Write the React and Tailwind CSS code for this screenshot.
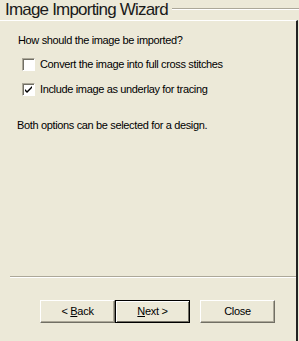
import React from 'react';

const Checkbox = ({ checked }) => (
  <span className="w-[13px] h-[13px] bg-white border border-t-[#aca899] border-l-[#aca899] border-b-white border-r-white shadow-[inset_1px_1px_0_#716f64] flex items-center justify-center shrink-0">
    {checked && (
      <svg width="9" height="9" viewBox="0 0 9 9">
        <path d="M1 4 L3 6 L8 1 L8 3 L3 8 L1 6 Z" fill="#000" />
      </svg>
    )}
  </span>
);

const WizButton = ({ children, isDefault, className = '' }) => (
  <button
    className={`w-[75px] h-[23px] shrink-0 bg-[#ece9d8] text-[11px] text-black ${className} ${
      isDefault
        ? 'border border-black shadow-[inset_1px_1px_0_#fff,inset_-1px_-1px_0_#716f64]'
        : 'border border-t-white border-l-white border-r-[#716f64] border-b-[#716f64] shadow-[inset_-1px_-1px_0_#aca899]'
    }`}
  >
    <span className="tracking-[-0.3px]">{children}</span>
  </button>
);

export default function App() {
  return (
    <div className="w-[299px] h-[341px] bg-[#ece9d8] overflow-hidden flex flex-col text-black" style={{ fontFamily: '"Liberation Sans", Arial, sans-serif' }}>
      {/* title */}
      <div className="h-[20px] flex items-center shrink-0">
        <span className="pl-[5px] text-[17px] leading-[20px] tracking-[-0.8px] text-[#1a1a1a] whitespace-nowrap">Image Importing Wizard</span>
        <div className="flex-1 ml-[4px] mt-[-3px] border-t border-t-[#aca899] border-b border-b-white" />
      </div>

      <div className="flex-1 flex">
        <div className="flex-1 flex flex-col border-r-2 border-r-[#222] border-t border-t-white">
          <div className="flex-1 pt-[13px] pl-[18px] text-[11px] leading-[13px] tracking-[-0.35px]">
            <div>How should the image be imported?</div>
            <div className="flex items-center gap-[5px] mt-[11px] ml-[4px]">
              <Checkbox />
              <span>Convert the image into full cross stitches</span>
            </div>
            <div className="flex items-center gap-[5px] mt-[12px] ml-[4px]">
              <Checkbox checked />
              <span>Include image as underlay for tracing</span>
            </div>
            <div className="mt-[23px] -ml-[1px]">Both options can be selected for a design.</div>
          </div>

          <div className="ml-[10px] border-t border-t-[#aca899] border-b border-b-white" />
          <div className="h-[63px] flex items-start pt-[22px] pl-[40px]">
            <WizButton>&lt; <span className="underline">B</span>ack</WizButton>
            <WizButton isDefault><span className="underline">N</span>ext &gt;</WizButton>
            <WizButton className="ml-[10px]">Close</WizButton>
          </div>
        </div>
        <div className="w-[1px]" />
      </div>
    </div>
  );
}
